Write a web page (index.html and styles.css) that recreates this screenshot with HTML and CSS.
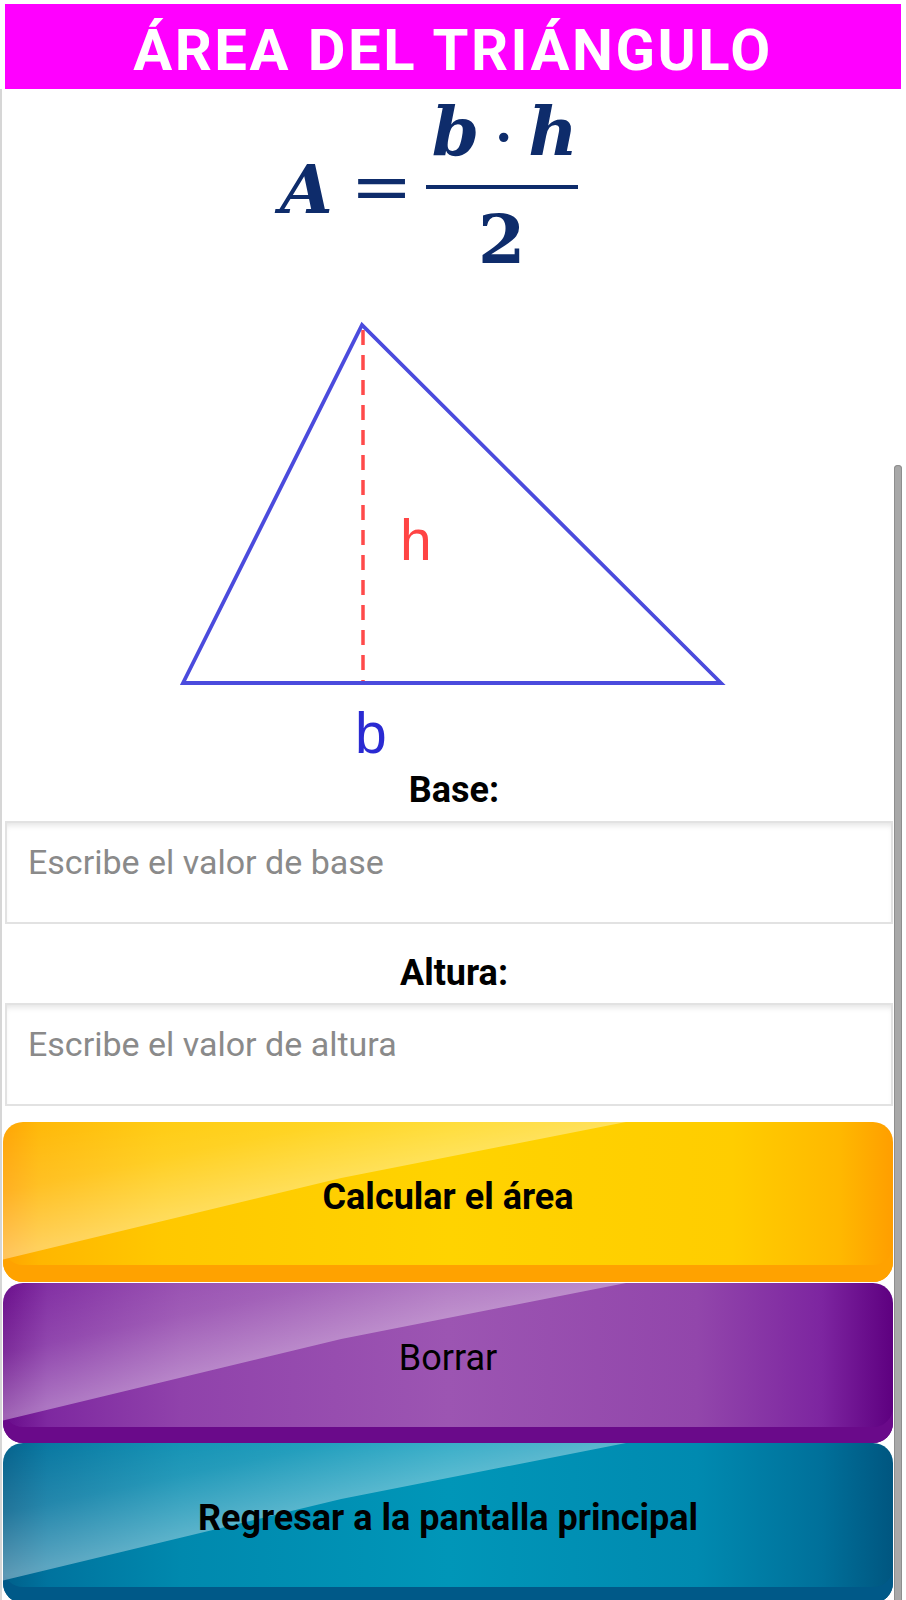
FILE: index.html
```html
<!DOCTYPE html>
<html lang="es">
<head>
<meta charset="utf-8">
<title>Área del triángulo</title>
<link rel="stylesheet" href="styles.css">
</head>
<body>
<div class="app">
  <header class="title-bar">
    <h1 class="title">ÁREA DEL TRIÁNGULO</h1>
  </header>
  <main class="content">
    <div class="formula">
      <span class="f-var f-a">A</span>
      <span class="f-eq">=</span>
      <span class="frac">
        <span class="num"><span class="f-var">b</span><span class="f-dot">·</span><span class="f-var">h</span></span>
        <span class="den">2</span>
      </span>
    </div>

    <svg class="figure" width="904" height="465" viewBox="2 300 904 465" xmlns="http://www.w3.org/2000/svg">
      <line x1="363" y1="330" x2="363" y2="683" stroke="#ff4a4a" stroke-width="3.5" stroke-dasharray="15 10"/>
      <polygon points="183,683 362,325 721,683" fill="none" stroke="#4b4bdd" stroke-width="3.8" stroke-linejoin="miter"/>
      <text x="400" y="560" class="lbl-h">h</text>
      <text x="355" y="753" class="lbl-b">b</text>
    </svg>

    <label class="field-label" for="base">Base:</label>
    <input id="base" class="field" type="text" placeholder="Escribe el valor de base">

    <label class="field-label field-label-2" for="altura">Altura:</label>
    <input id="altura" class="field" type="text" placeholder="Escribe el valor de altura">

    <div class="actions">
      <button class="btn btn-yellow" type="button"><span class="btn-text bold">Calcular el área</span></button>
      <button class="btn btn-purple" type="button"><span class="btn-text">Borrar</span></button>
      <button class="btn btn-blue" type="button"><span class="btn-text bold">Regresar a la pantalla principal</span></button>
    </div>
  </main>
  <div class="scrollbar"></div>
</div>
</body>
</html>
```

FILE: styles.css
```css
* { box-sizing: border-box; }

html, body {
  margin: 0;
  padding: 0;
  background: #ffffff;
}

body {
  font-family: Roboto, "Noto Sans", "Liberation Sans", sans-serif;
  width: 906px;
  height: 1600px;
  overflow: hidden;
}

.app {
  position: relative;
  width: 906px;
  height: 1600px;
}

/* Header */
.title-bar {
  margin: 4px 5px 0 5px;
  height: 85px;
  background: #ff00ff;
  display: flex;
  align-items: center;
  justify-content: center;
  padding-top: 6px;
}

.title {
  margin: 0;
  color: #ffffff;
  font-family: Roboto, "Liberation Sans", sans-serif;
  font-weight: 700;
  font-size: 58px;
  letter-spacing: 2.5px;
  line-height: 1;
}

/* Content column */
.content {
  border-left: 2px solid #d6d6d6;
  display: flex;
  flex-direction: column;
  align-items: stretch;
}

/* Formula */
.formula {
  height: 192px;
  display: flex;
  align-items: center;
  justify-content: flex-start;
  padding-left: 278px;
  color: #0e2c6b;
  font-family: "DejaVu Serif", "Liberation Serif", serif;
  font-weight: 700;
  font-size: 68px;
  line-height: 1;
}

.f-var { font-style: italic; }

.f-a {
  margin-top: 7px;
  margin-right: 20px;
}

.f-eq {
  font-style: normal;
  font-weight: 400;
  margin-top: 4px;
  margin-right: 16px;
  transform: scaleX(1.1);
}

.frac {
  display: flex;
  flex-direction: column;
  align-items: stretch;
  width: 152px;
}

.num {
  display: flex;
  justify-content: space-between;
  align-items: baseline;
  padding: 0 0 20px 6px;
  border-bottom: 4px solid #0e2c6b;
  height: 92px;
  line-height: 68px;
}

.f-dot {
  font-style: normal;
  font-weight: 700;
  font-size: 50px;
}

.den {
  text-align: center;
  padding-top: 16px;
  height: 84px;
  line-height: 68px;
  font-style: normal;
}

/* Triangle figure */
.figure {
  display: block;
  margin-top: 19px;
}

.lbl-h {
  font-family: "Liberation Sans", Arial, sans-serif;
  font-size: 57px;
  fill: #ff4444;
}

.lbl-b {
  font-family: "Liberation Sans", Arial, sans-serif;
  font-size: 57px;
  fill: #2a2ad2;
}

/* Labels and inputs */
.field-label {
  display: block;
  text-align: center;
  font-weight: 700;
  font-size: 36px;
  line-height: 40px;
  color: #000000;
  margin: 5px 0 11px 0;
}

.field-label-2 {
  margin: 29px 0 10px 0;
}

.field {
  display: block;
  margin-left: 3px;
  width: 888px;
  height: 103px;
  border: 2px solid #e2e2e2;
  border-radius: 0;
  background: #ffffff;
  box-shadow: inset 0 5px 6px -3px rgba(0, 0, 0, 0.12);
  padding: 0 22px 21px 21px;
  font-family: Roboto, "Noto Sans", sans-serif;
  font-size: 34px;
  color: #333333;
  outline: none;
}

.field::placeholder {
  color: #8a8a8a;
  opacity: 1;
}

/* Buttons */
.actions {
  display: flex;
  flex-direction: column;
  margin: 16px 0 0 1px;
  width: 890px;
}

.btn {
  position: relative;
  overflow: hidden;
  height: 160px;
  width: 890px;
  margin: 0;
  border: none;
  border-radius: 20px;
  padding: 0 0 10px 0;
  display: flex;
  align-items: center;
  justify-content: center;
  font-family: Roboto, "Noto Sans", sans-serif;
  font-size: 36px;
  color: #000000;
  cursor: pointer;
}

.btn + .btn { margin-top: 1px; }
.btn-blue { margin-top: 0 !important; }

/* glossy highlight over the upper-left part of each button */
.btn::before {
  content: "";
  position: absolute;
  left: 0;
  top: 0;
  right: 0;
  bottom: 0;
  clip-path: polygon(0 0, 70% 0, 38% 35%, 0 86%);
  background: linear-gradient(168deg, rgba(255, 255, 255, 0.02) 0%, rgba(255, 255, 255, 0.14) 20%, rgba(255, 255, 255, 0.36) 38%);
}

.btn-text {
  position: relative;
  z-index: 1;
  font-weight: 400;
}

.btn-text.bold { font-weight: 700; }

.btn-yellow {
  background: linear-gradient(90deg, #ffa300 0%, #ffb600 4%, #ffc800 18%, #ffd300 50%, #ffcd00 82%, #ffb800 94%, #ff9e00 100%);
  box-shadow: inset 0 -17px 0 0 #ffa200;
}

.btn-purple {
  background: linear-gradient(90deg, #680a8a 0%, #7e28a0 5%, #9042ab 20%, #9c55b2 50%, #9246ab 78%, #7d25a0 92%, #5e0080 100%);
  box-shadow: inset 0 -16px 0 0 #6a0a8a;
}

.btn-blue {
  background: linear-gradient(90deg, #005f8a 0%, #00739e 5%, #0089ae 20%, #0096b8 50%, #008ab0 78%, #00709a 92%, #005680 100%);
  box-shadow: inset 0 -16px 0 0 #005988;
}

/* Overlay scrollbar */
.scrollbar {
  position: absolute;
  left: 894px;
  top: 461px;
  width: 8px;
  height: 1200px;
  border-radius: 4px;
  background: #a8a8a8;
  box-shadow: inset 0 0 0 1px #8e8e8e;
}
```
